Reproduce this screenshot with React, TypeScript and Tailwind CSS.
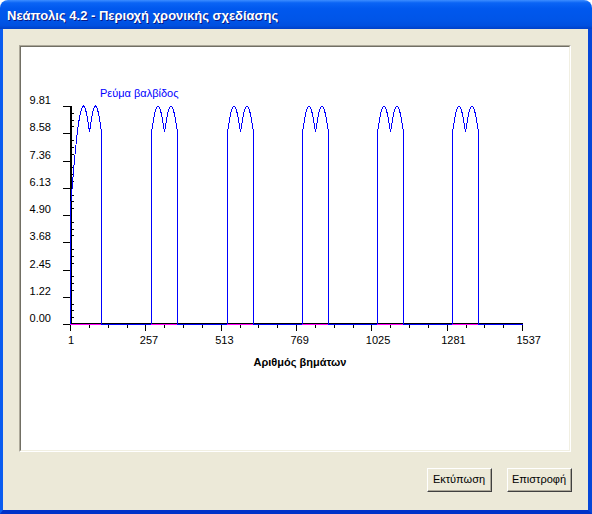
import React from "react";

const Y0 = 324;
const YTOP = 106;
const XL = 70;
const XR = 522;
const STEP_X = (XR - XL) / 6;
const STEP_Y = (Y0 - YTOP) / 8;

const yLabels = ["0.00", "1.22", "2.45", "3.68", "4.90", "6.13", "7.36", "8.58", "9.81"];
const xLabels = ["1", "257", "513", "769", "1025", "1281", "1537"];
const pulseStarts = [151, 227, 302, 377, 452];
const W = 26;

const hump = (x: number, x0: number, half: number) =>
  YTOP + 26 * (1 - Math.abs(Math.sin((Math.PI * (x - x0)) / half)));

function pulsePath(s: number) {
  const pts: string[] = [`M${s + 0.5},${Y0}`];
  for (let dx = 0; dx <= W + 0.01; dx += 0.5) {
    pts.push(`L${s + dx + 0.5},${hump(s + dx, s, W / 2).toFixed(1)}`);
  }
  pts.push(`L${s + W + 0.5},${Y0}`);
  return pts.join(" ");
}

function firstPulse() {
  const pts: string[] = [`M70.5,${Y0}`, `L70.5,207`];
  for (let dx = 0; dx <= 13; dx += 0.5) {
    const y = YTOP + 101 * (1 - Math.sin((Math.PI / 2) * (dx / 13)));
    pts.push(`L${70.5 + dx},${y.toFixed(1)}`);
  }
  for (let x = 83; x <= 101; x += 0.5) {
    pts.push(`L${x + 0.5},${hump(x, 77, 12).toFixed(1)}`);
  }
  pts.push(`L101.5,${Y0}`);
  return pts.join(" ");
}

const Chart = () => (
  <svg
    width={548}
    height={403}
    viewBox="21 47 548 403"
    className="block"
    style={{ fontFamily: '"Liberation Sans", Arial, sans-serif' }}
  >
    <text x={100} y={97} fontSize={11} fill="#0000ff">
      Ρεύμα βαλβίδος
    </text>

    <g shapeRendering="crispEdges">
      {/* y axis */}
      <rect x={70} y={YTOP} width={2} height={Y0 - YTOP + 1} fill="#000" />
      {yLabels.map((_, i) => {
        const y = Math.round(Y0 - i * STEP_Y);
        return <rect key={"yt" + i} x={63} y={y} width={7} height={1} fill="#000" />;
      })}
      {Array.from({ length: 32 }).map((_, i) =>
        i % 4 === 0 ? null : (
          <rect key={"ym" + i} x={72} y={Math.round(Y0 - (i * STEP_Y) / 4)} width={2} height={1} fill="#000" />
        )
      )}
      {/* x axis */}
      <rect x={XL} y={323} width={XR - XL + 1} height={1} fill="#000" />
      {xLabels.map((_, i) => (
        <rect key={"xt" + i} x={Math.round(XL + i * STEP_X)} y={324} width={1} height={7} fill="#000" />
      ))}
      {Array.from({ length: 24 }).map((_, i) =>
        i % 4 === 0 ? null : (
          <rect key={"xm" + i} x={Math.round(XL + (i * STEP_X) / 4)} y={324} width={1} height={4} fill="#000" />
        )
      )}
      <rect x={XL} y={324} width={XR - XL + 1} height={1} fill="#0000ff" />
      <rect x={70} y={324} width={31} height={1} fill="#ff00ff" />
      {pulseStarts.map((s) => (
        <rect key={"pk" + s} x={s} y={324} width={W} height={1} fill="#ff00ff" />
      ))}
    </g>

    <g fill="none" stroke="#0000ff" strokeWidth={1} shapeRendering="crispEdges">
      <path d={firstPulse()} />
      {pulseStarts.map((s) => (
        <path key={s} d={pulsePath(s)} />
      ))}
    </g>

    {yLabels.map((l, i) => (
      <text key={l} x={51} y={Math.round(Y0 - i * STEP_Y) - 2} fontSize={11} textAnchor="end" fill="#000">
        {l}
      </text>
    ))}
    {xLabels.map((l, i) => (
      <text key={l} x={i === 0 ? 68 : XL + i * STEP_X - 5.5} y={344} fontSize={11} fill="#000">
        {l}
      </text>
    ))}
    <text x={300} y={366} fontSize={11} fontWeight="bold" textAnchor="middle" fill="#000">
      Αριθμός βημάτων
    </text>
  </svg>
);

const Button = ({ label, w }: { label: string; w: string }) => (
  <button
    className={`${w} h-[24px] border-t border-l border-white border-b border-r border-b-[#404040] border-r-[#404040] bg-[#ece9d8] p-0`}
  >
    <div className="flex h-full items-center justify-center border-b border-r border-[#aca899] text-[11px] text-black">
      {label}
    </div>
  </button>
);

export default function App() {
  return (
    <div
      className="h-[514px] w-[592px] bg-white"
      style={{ fontFamily: '"Liberation Sans", Arial, sans-serif' }}
    >
      <div className="flex h-full flex-col overflow-hidden rounded-t-[8px]">
        <div className="flex h-[29px] shrink-0 items-center bg-[linear-gradient(to_bottom,#3c8dff_0%,#0a64f5_10%,#0058ee_30%,#0055e8_70%,#0050e0_88%,#0040c8_100%)] pl-[7px] pt-[3px]">
          <span className="text-[13px] font-bold text-white [text-shadow:1px_1px_0_#0a1883]">
            Νεάπολις 4.2 - Περιοχή χρονικής σχεδίασης
          </span>
        </div>
        <div className="flex flex-1 flex-col border-b-[4px] border-l-[3px] border-r-[4px] border-b-[#0032c8] border-l-[#0a5cf0] border-r-[#0546d8] bg-[#ece9d8]">
          <div className="ml-[16px] mr-[17px] mt-[16px] h-[407px] border border-t-[#aca899] border-l-[#aca899] border-b-white border-r-white">
            <div className="h-full border border-t-[#716f64] border-l-[#716f64] border-b-[#f1efe2] border-r-[#f1efe2] bg-white">
              <Chart />
            </div>
          </div>
          <div className="mt-[16px] flex justify-end gap-[15px] pr-[16px]">
            <Button label="Εκτύπωση" w="w-[65px]" />
            <Button label="Επιστροφή" w="w-[65px]" />
          </div>
        </div>
      </div>
    </div>
  );
}
